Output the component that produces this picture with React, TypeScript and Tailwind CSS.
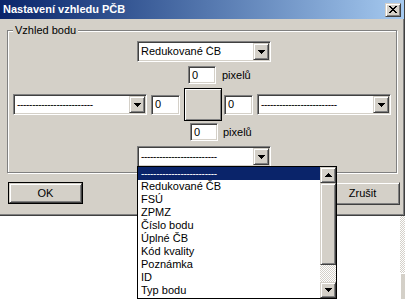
import React from 'react';

const DASHES = '-------------------------';

const OPTIONS = [
  'Redukované ČB',
  'FSÚ',
  'ZPMZ',
  'Číslo bodu',
  'Úplné ČB',
  'Kód kvality',
  'Poznámka',
  'ID',
  'Typ bodu',
];

function Arrow({ up = false }: { up?: boolean }) {
  return (
    <svg width="7" height="4" viewBox="0 0 7 4" shapeRendering="crispEdges" className="block">
      <path
        d={up ? 'M3 0h1v1h1v1h1v1h1v1h-7v-1h1v-1h1v-1h1z' : 'M0 0h7v1h-1v1h-1v1h-1v1h-1v-1h-1v-1h-1v-1h-1z'}
        fill="#000"
      />
    </svg>
  );
}

// raised 3d button face (classic windows)
function RaisedBox({ className = '', children }: { className?: string; children?: React.ReactNode }) {
  return (
    <div
      className={`bg-[#d4d0c8] border border-t-[#d4d0c8] border-l-[#d4d0c8] border-b-[#404040] border-r-[#404040] shadow-[inset_1px_1px_0_#fff,inset_-1px_-1px_0_#808080] flex items-center justify-center ${className}`}
    >
      {children}
    </div>
  );
}

function Dashes({ className = '' }: { className?: string }) {
  return <span className={`text-[10px] tracking-[-0.3px] whitespace-nowrap ${className}`}>{DASHES}</span>;
}

function Combo({ value, className = '' }: { value?: string; className?: string }) {
  return (
    <div
      className={`w-[134px] h-[21px] bg-white border border-t-[#808080] border-l-[#808080] border-b-white border-r-white shadow-[inset_1px_1px_0_#404040,inset_-1px_-1px_0_#d4d0c8] p-[1px] flex items-center ${className}`}
    >
      <div className="flex-1 pl-[2px] leading-none overflow-hidden whitespace-nowrap">
        {value ? value : <Dashes />}
      </div>
      <RaisedBox className="w-[16px] h-[17px]">
        <Arrow />
      </RaisedBox>
    </div>
  );
}

function Edit({ value, className = '' }: { value: string; className?: string }) {
  return (
    <div
      className={`bg-white border border-t-[#808080] border-l-[#808080] border-b-white border-r-white shadow-[inset_1px_1px_0_#404040,inset_-1px_-1px_0_#d4d0c8] pl-[3px] flex items-center leading-none ${className}`}
    >
      {value}
    </div>
  );
}

export default function App() {
  return (
    <div className="w-[405px] h-[299px] relative overflow-hidden bg-white font-['Liberation_Sans',Arial,sans-serif] text-[11px] text-black flex flex-col">
      {/* ── Dialog window ── */}
      <div className="h-[216px] shrink-0 bg-[#d4d0c8] border-b border-r border-[#404040] shadow-[inset_-1px_-1px_0_#808080] flex flex-col">
        {/* title bar */}
        <div className="h-[19px] bg-linear-to-r from-[#0a246a] to-[#a6caf0] flex items-center justify-between pl-[3px] pr-[3px]">
          <span className="text-white font-bold text-[11px] leading-none">Nastavení vzhledu PČB</span>
          <RaisedBox className="w-[16px] h-[14px]">
            <svg width="8" height="7" viewBox="0 0 8 7" shapeRendering="crispEdges">
              <path
                d="M0 0h2v1h1v1h2v-1h1v-1h2v1h-1v1h-1v1h-1v1h1v1h1v1h1v1h-2v-1h-1v-1h-2v1h-1v1h-2v-1h1v-1h1v-1h1v-1h-1v-1h-1v-1h-1z"
                fill="#000"
              />
            </svg>
          </RaisedBox>
        </div>

        {/* group box */}
        <div className="relative mt-[11px] ml-[7px] w-[390px] h-[143px] border border-[#808080] shadow-[inset_1px_1px_0_#fff,1px_1px_0_#fff] flex flex-col items-start pt-[10px]">
          <span className="absolute left-[5px] -top-[7px] bg-[#d4d0c8] px-[2px] leading-[13px]">Vzhled bodu</span>

          <Combo value="Redukované ČB" className="ml-[129px]" />

          <div className="mt-[4px] ml-[180px] flex items-center">
            <Edit value="0" className="w-[28px] h-[18px]" />
            <span className="ml-[6px]">pixelů</span>
          </div>

          <div className="mt-[4px] ml-[5px] h-[33px] flex items-center">
            <Combo />
            <Edit value="0" className="ml-[4px] w-[29px] h-[20px]" />
            <div className="ml-[4px] w-[38px] h-[33px] border border-black bg-[#d4d0c8] shadow-[inset_1px_1px_0_#fff,inset_-1px_-1px_0_#808080]" />
            <Edit value="0" className="ml-[2px] w-[29px] h-[20px]" />
            <Combo className="ml-[4px]" />
          </div>

          <div className="mt-[2px] ml-[182px] flex items-center">
            <Edit value="0" className="w-[28px] h-[18px]" />
            <span className="ml-[5px]">pixelů</span>
          </div>

          <Combo className="mt-[5px] ml-[129px]" />
        </div>

        {/* buttons */}
        <div className="mt-[9px] flex justify-between pl-[8px] pr-[4px]">
          <div className="w-[75px] h-[22px] border border-black">
            <RaisedBox className="w-full h-full">OK</RaisedBox>
          </div>
          <RaisedBox className="w-[75px] h-[23px]">Zrušit</RaisedBox>
        </div>
      </div>

      {/* ── background under the dialog ── */}
      <div className="flex-1 flex">
        <div className="flex-1" />
        <div className="w-[5px] flex flex-col">
          <div className="h-[57px] bg-[repeating-conic-gradient(#d4d0c8_0%_25%,#ffffff_0%_50%)] bg-size-[2px_2px]" />
          <div className="flex-1 bg-[#d4d0c8] border-l border-t border-white" />
        </div>
      </div>

      {/* ── open dropdown list ── */}
      <div className="absolute left-[137px] top-[166px] w-[200px] h-[133px] border border-black bg-white flex">
        <div className="flex-1 flex flex-col">
          <div className="h-[13px] bg-[#0a246a] text-white pl-[3px] leading-[13px]">
            <Dashes />
          </div>
          {OPTIONS.map((opt) => (
            <div key={opt} className="h-[13px] pl-[3px] leading-[13px] whitespace-nowrap">
              {opt}
            </div>
          ))}
        </div>
        <div className="w-[16px] flex flex-col bg-[repeating-conic-gradient(#d4d0c8_0%_25%,#ffffff_0%_50%)] bg-size-[2px_2px]">
          <RaisedBox className="h-[16px]">
            <Arrow up />
          </RaisedBox>
          <RaisedBox className="h-[82px]" />
          <div className="flex-1" />
          <RaisedBox className="h-[16px]">
            <Arrow />
          </RaisedBox>
        </div>
      </div>
    </div>
  );
}
